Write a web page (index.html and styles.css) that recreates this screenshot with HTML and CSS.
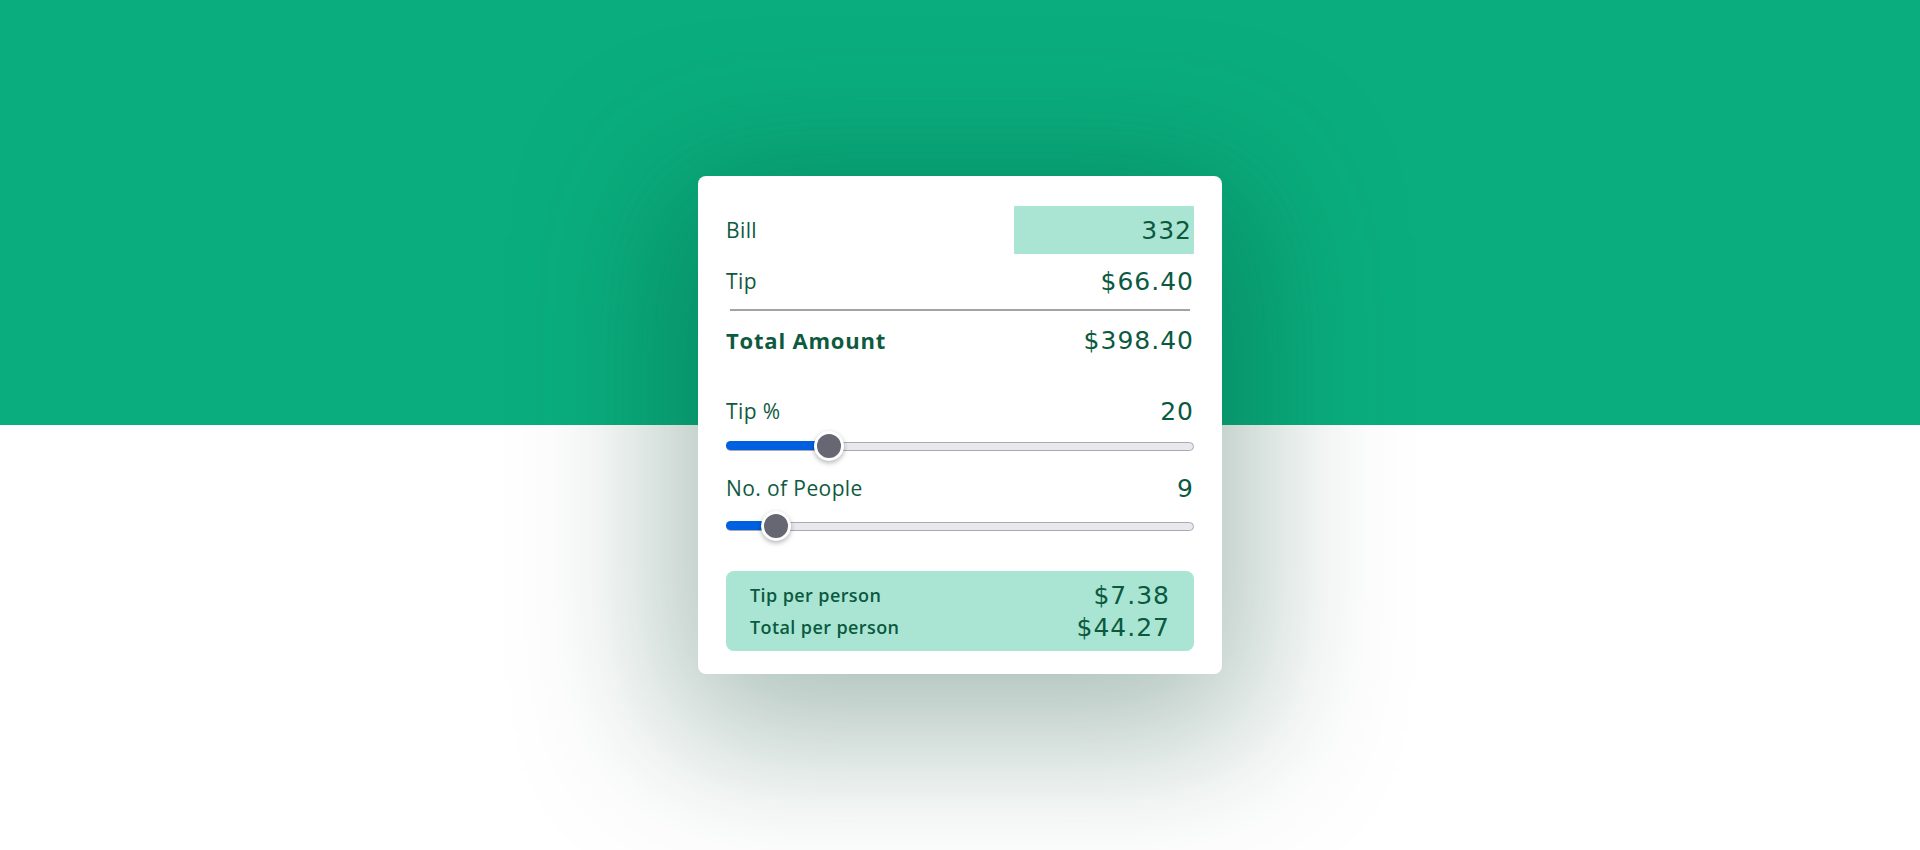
FILE: index.html
```html
<!DOCTYPE html>
<html lang="en">
<head>
<meta charset="utf-8">
<title>Tip Calculator</title>
<link rel="stylesheet" href="styles.css">
</head>
<body>
<main class="page">
  <section class="card">
    <div class="row row-bill">
      <label class="label" for="bill">Bill</label>
      <input id="bill" class="bill-input" type="text" value="332">
    </div>
    <div class="row row-tip">
      <span class="label">Tip</span>
      <span class="num">$66.40</span>
    </div>
    <hr class="divider">
    <div class="row row-total">
      <span class="label label-bold">Total Amount</span>
      <span class="num">$398.40</span>
    </div>
    <div class="row row-pct">
      <span class="label">Tip %</span>
      <span class="num">20</span>
    </div>
    <div class="slider" style="--p:0.2">
      <div class="track"></div>
      <div class="fill"></div>
      <div class="thumb"></div>
    </div>
    <div class="row row-people">
      <span class="label">No. of People</span>
      <span class="num">9</span>
    </div>
    <div class="slider slider-people" style="--p:0.0808">
      <div class="track"></div>
      <div class="fill"></div>
      <div class="thumb"></div>
    </div>
    <div class="result">
      <div class="result-row">
        <span class="result-label">Tip per person</span>
        <span class="num">$7.38</span>
      </div>
      <div class="result-row">
        <span class="result-label">Total per person</span>
        <span class="num">$44.27</span>
      </div>
    </div>
  </section>
</main>
</body>
</html>
```

FILE: styles.css
```css
html, body {
  margin: 0;
  padding: 0;
}

body {
  height: 850px;
  background: linear-gradient(to bottom, #0aae7e 0, #0aae7e 425px, #ffffff 425px, #ffffff 100%);
  font-family: "Open Sans", "Lato", sans-serif;
  color: #0b5a3f;
}

.page {
  height: 850px;
  display: flex;
  align-items: center;
  justify-content: center;
}

.card {
  width: 524px;
  box-sizing: border-box;
  padding: 30px 28px 23px;
  background: #ffffff;
  border-radius: 8px;
  box-shadow: 0 34px 150px 30px rgba(6, 66, 48, 0.34);
}

.row {
  display: flex;
  align-items: center;
  justify-content: space-between;
}

.row-bill { height: 48px; }
.row-tip { margin-top: 7px; height: 40px; }
.row-total { margin-top: 7px; height: 44px; }
.row-pct { margin-top: 29px; height: 40px; }
.row-people { margin-top: 7px; height: 40px; }

.label {
  font-family: "Open Sans", "Lato", sans-serif;
  font-size: 21px;
  font-weight: 400;
  letter-spacing: 0.4px;
  color: #0e5a40;
}

.label-bold {
  font-size: 22px;
  font-weight: 700;
  letter-spacing: 0.8px;
}

.num,
.bill-input {
  font-family: "DejaVu Sans", "Verdana", sans-serif;
  font-size: 25px;
  letter-spacing: 1px;
  color: #0b5a3f;
}

.bill-input {
  width: 180px;
  height: 48px;
  box-sizing: border-box;
  border: 0;
  padding: 0 2px;
  margin: 0;
  background: #aae5d4;
  text-align: right;
  outline: none;
}

.divider {
  margin: 8px 4px 0;
  border: 0;
  height: 2px;
  background: #a3a3a3;
}

.slider {
  position: relative;
  height: 30px;
  display: flex;
  align-items: center;
}

.slider-people {
  margin-top: 3px;
}

.track {
  flex: 1;
  height: 9px;
  box-sizing: border-box;
  border: 1px solid #a9a9b4;
  border-radius: 5px;
  background: #e9e9ed;
}

.fill {
  position: absolute;
  left: 0;
  top: 10px;
  height: 9px;
  width: calc(15px + (100% - 30px) * var(--p));
  border-radius: 5px 0 0 5px;
  background: #0060df;
}

.thumb {
  position: absolute;
  top: 0;
  left: calc((100% - 30px) * var(--p));
  width: 30px;
  height: 30px;
  box-sizing: border-box;
  border: 3px solid #ffffff;
  border-radius: 50%;
  background: #676774;
  box-shadow: 0 2px 5px rgba(0, 0, 0, 0.3);
}

.result {
  margin-top: 30px;
  padding: 8px 24px;
  border-radius: 8px;
  background: #aae5d4;
}

.result-row {
  height: 32px;
  display: flex;
  align-items: center;
  justify-content: space-between;
}

.result-label {
  font-family: "Open Sans", "Lato", sans-serif;
  font-size: 18px;
  font-weight: 600;
  letter-spacing: 0.4px;
  color: #0b5a3f;
}
```
